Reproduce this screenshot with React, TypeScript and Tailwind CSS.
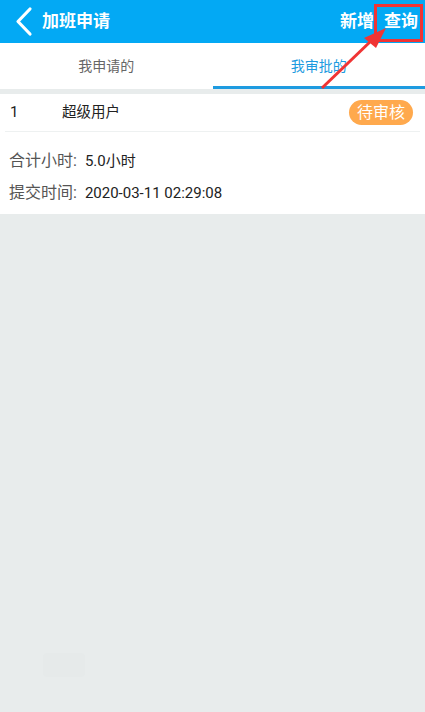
import React from "react";

const font = { fontFamily: 'Roboto, "Noto Sans CJK SC", sans-serif' };

function Header() {
  return (
    <header className="flex h-[43px] items-center bg-[#03a9f4] text-white">
      <svg width="34" height="43" viewBox="0 0 34 43" className="ml-[6px] shrink-0">
        <path d="M24 9 L12 21.5 L24 34" fill="none" stroke="white" strokeWidth="3.2" strokeLinecap="round" strokeLinejoin="round" />
      </svg>
      <h1 className="ml-[2px] text-[17px] font-bold leading-none">加班申请</h1>
      <div className="ml-auto flex items-center gap-[10px] pr-[7px] text-[17px] font-bold leading-none">
        <span>新增</span>
        <span>查询</span>
      </div>
    </header>
  );
}

function Tabs() {
  return (
    <div className="flex h-[46px] bg-white text-[14px]">
      <div className="flex flex-1 items-center justify-center text-[#666]">我申请的</div>
      <div className="flex flex-1 items-center justify-center border-b-[3px] border-[#1e9be0] pt-[3px] text-[#1e9be0]">
        我审批的
      </div>
    </div>
  );
}

function Record() {
  return (
    <section className="mt-[5px] bg-white pb-[5px]">
      <div className="mx-[5px] flex h-[38px] items-center border-b border-[#eef1f1] text-[15px] text-[#222]">
        <span className="w-[57px] pl-[5px]">1</span>
        <span className="text-[14.5px]">超级用户</span>
        <span className="ml-auto mr-[7px] flex h-[25px] items-center rounded-full bg-[#ffa94d] px-[8px] text-[16px] text-white">
          待审核
        </span>
      </div>
      <div className="px-[9px] pt-[13px] leading-[32px]">
        <div>
          <span className="text-[16px] text-[#555]">合计小时:</span>
          <span className="ml-[8px] text-[15px] text-[#222]">5.0小时</span>
        </div>
        <div>
          <span className="text-[16px] text-[#555]">提交时间:</span>
          <span className="ml-[8px] text-[15px] text-[#222]">2020-03-11 02:29:08</span>
        </div>
      </div>
    </section>
  );
}

export default function App() {
  return (
    <div className="relative flex h-[712px] w-[425px] flex-col overflow-hidden bg-[#e8ecec]" style={font}>
      <Header />
      <Tabs />
      <Record />
      <div className="flex flex-1 items-end pb-[35px] pl-[43px]">
        <div className="h-[24px] w-[42px] rounded-[4px] bg-[#e6eaea]" />
      </div>
      <svg className="pointer-events-none absolute left-0 top-0" width="425" height="100" viewBox="0 0 425 100">
        <rect x="375.5" y="5.5" width="46" height="35" fill="none" stroke="#f03434" strokeWidth="3" />
        <line x1="322" y1="88" x2="372" y2="40" stroke="#f03434" strokeWidth="3" />
        <polygon points="386,28 364,38 376,48" fill="#f03434" />
      </svg>
    </div>
  );
}
